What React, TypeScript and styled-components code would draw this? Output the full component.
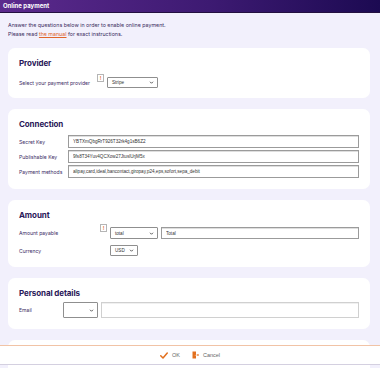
import React from 'react';
import styled, { createGlobalStyle } from 'styled-components';

const GlobalStyle = createGlobalStyle`
  html, body {
    margin: 0;
    padding: 0;
    background: #f2f0fc;
    font-family: Inter, "Noto Sans", sans-serif;
    color: #35265f;
  }
`;

const Page = styled.div`
  min-height: 368px;
  padding-bottom: 20px;
`;

const TopBar = styled.div`
  height: 12px;
  line-height: 12px;
  padding-left: 3px;
  background: linear-gradient(90deg, #5c2a8d 0%, #3d1a72 55%, #1c0a52 100%);
  border-bottom: 1px solid #241040;
  color: #fff;
  font-size: 6px;
  font-weight: 700;
`;

const Intro = styled.div`
  margin: 8px 8px 9px 8px;
  font-size: 5.3px;
  line-height: 9px;
  color: #3a2c5c;

  a {
    color: #e0652a;
    text-decoration: underline;
  }
`;

const Card = styled.section<{ $padTop?: number; $padBottom?: number; $minHeight?: number }>`
  margin: 0 10px 11px 8px;
  padding: ${p => p.$padTop ?? 9}px 11px ${p => p.$padBottom ?? 10}px 11px;
  min-height: ${p => p.$minHeight ?? 0}px;
  background: #fff;
  border-radius: 7px;
`;

const Heading = styled.h2<{ $gap: number }>`
  margin: 0 0 ${p => p.$gap}px 0;
  font-size: 8px;
  line-height: 12px;
  font-weight: 700;
  color: #2a1858;
  letter-spacing: -0.1px;
`;

const Rows = styled.div<{ $gap: number }>`
  display: flex;
  flex-direction: column;
  gap: ${p => p.$gap}px;
`;

const Row = styled.div`
  display: flex;
  align-items: center;
`;

const Label = styled.div<{ $width: number }>`
  width: ${p => p.$width}px;
  flex: none;
  font-size: 5.1px;
  line-height: 8px;
  color: #3d2d66;
  white-space: nowrap;
`;

const HintCell = styled.div`
  display: flex;
  width: 10px;
  height: 0;
  flex: none;
  align-self: flex-start;
  margin-top: -3px;
`;

const Hint = styled.span`
  display: flex;
  align-items: center;
  justify-content: center;
  width: 5px;
  height: 6px;
  border: 1px solid #b5b5b5;
  background: #fff;
  color: #e26a1e;
  font-family: "Liberation Sans", Arial, sans-serif;
  font-size: 5px;
  font-weight: 700;
  line-height: 1;
`;

const Fields = styled.div`
  display: flex;
  flex: 1;
  gap: 3px;
  min-width: 0;
`;

const SelectBox = styled.div<{ $width: number; $height?: number }>`
  width: ${p => p.$width}px;
  height: ${p => p.$height ?? 11}px;
  flex: none;
  box-sizing: border-box;
  display: flex;
  align-items: center;
  justify-content: space-between;
  padding: 0 3px 0 4px;
  border: 1px solid #8f8f8f;
  border-radius: 1px;
  background: #fff;
  font-family: "Liberation Sans", Arial, sans-serif;
  font-size: 4.6px;
  color: #333;

  svg {
    width: 5px;
    height: 5px;
  }
`;

const TextInput = styled.input<{ $light?: boolean; $height?: number }>`
  flex: 1;
  min-width: 0;
  height: ${p => p.$height ?? 13}px;
  box-sizing: border-box;
  margin: 0;
  padding: 0 4px;
  border: 1px solid ${p => (p.$light ? '#d0d0d0' : '#9b9b9b')};
  box-shadow: inset 0 1px 0 ${p => (p.$light ? '#f0f0f0' : '#dedede')};
  background: #fff;
  font-family: "Liberation Sans", Arial, sans-serif;
  font-size: 4.6px;
  color: #333;
  outline: none;
`;

const Footer = styled.div`
  position: fixed;
  left: 0;
  right: 0;
  bottom: 3px;
  height: 18px;
  display: flex;
  align-items: center;
  justify-content: center;
  gap: 12px;
  background: #fff;
  border-top: 1px solid #f1c3a6;
  border-bottom: 1px solid #d4d0e0;
`;

const FooterButton = styled.button`
  display: flex;
  align-items: center;
  gap: 4px;
  padding: 0;
  border: none;
  background: none;
  font-family: "Liberation Sans", Arial, sans-serif;
  font-size: 5.5px;
  color: #666;
  cursor: pointer;

  svg {
    display: block;
  }
`;

const Chevron = () => (
  <svg viewBox="0 0 10 10">
    <path d="M2 3.5 L5 6.5 L8 3.5" fill="none" stroke="#333" strokeWidth="1.6" />
  </svg>
);

const CheckIcon = () => (
  <svg width="8" height="7" viewBox="0 0 16 14">
    <path d="M1.5 7.5 L6 12 L14.5 2" fill="none" stroke="#e2701f" strokeWidth="3" strokeLinecap="round" strokeLinejoin="round" />
  </svg>
);

const ExitIcon = () => (
  <svg width="7" height="8" viewBox="0 0 14 16">
    <path d="M1 1 H8 V15 H1 Z" fill="#e2701f" />
    <path d="M9 8 H13 M11 6 L13 8 L11 10" fill="none" stroke="#e2701f" strokeWidth="1.6" />
    <circle cx="6.3" cy="8.5" r="0.8" fill="#fff" />
  </svg>
);

const Select: React.FC<{ value?: string; width: number; height?: number }> = ({ value = '', width, height }) => (
  <SelectBox $width={width} $height={height}>
    <span>{value}</span>
    <Chevron />
  </SelectBox>
);

const App: React.FC = () => (
  <Page>
    <GlobalStyle />
    <TopBar>Online payment</TopBar>

    <Intro>
      Answer the questions below in order to enable online payment.
      <br />
      Please read <a href="#manual">the manual</a> for exact instructions.
    </Intro>

    <Card $padBottom={10}>
      <Heading $gap={8}>Provider</Heading>
      <Row>
        <Label $width={78}>Select your payment provider</Label>
        <HintCell><Hint>!</Hint></HintCell>
        <Fields>
          <Select value="Stripe" width={51} height={11} />
        </Fields>
      </Row>
    </Card>

    <Card $padBottom={11}>
      <Heading $gap={5}>Connection</Heading>
      <Rows $gap={2}>
        <Row>
          <Label $width={49}>Secret Key</Label>
          <Fields>
            <TextInput readOnly value="YBTXmQbgRrT926T32rk4g1sB6Z2" />
          </Fields>
        </Row>
        <Row>
          <Label $width={49}>Publishable Key</Label>
          <Fields>
            <TextInput readOnly value="9fs8T34Yuv4QCXow27JtuslUrjM5x" />
          </Fields>
        </Row>
        <Row>
          <Label $width={49}>Payment methods</Label>
          <Fields>
            <TextInput readOnly value="alipay,card,ideal,bancontact,giropay,p24,eps,sofort,sepa_debit" />
          </Fields>
        </Row>
      </Rows>
    </Card>

    <Card $padBottom={11}>
      <Heading $gap={6}>Amount</Heading>
      <Rows $gap={6}>
        <Row>
          <Label $width={81}>Amount payable</Label>
          <HintCell><Hint>!</Hint></HintCell>
          <Fields>
            <Select value="total" width={48} height={12} />
            <TextInput readOnly value="Total" $height={12} />
          </Fields>
        </Row>
        <Row>
          <Label $width={81}>Currency</Label>
          <HintCell />
          <Fields>
            <Select value="USD" width={28} height={11} />
          </Fields>
        </Row>
      </Rows>
    </Card>

    <Card $padBottom={11}>
      <Heading $gap={3}>Personal details</Heading>
      <Row>
        <Label $width={44}>Email</Label>
        <Fields>
          <Select width={35} height={16} />
          <TextInput readOnly value="" $light $height={16} />
        </Fields>
      </Row>
    </Card>

    <Card $minHeight={30} />

    <Footer>
      <FooterButton type="button">
        <CheckIcon />
        OK
      </FooterButton>
      <FooterButton type="button">
        <ExitIcon />
        Cancel
      </FooterButton>
    </Footer>
  </Page>
);

export default App;
